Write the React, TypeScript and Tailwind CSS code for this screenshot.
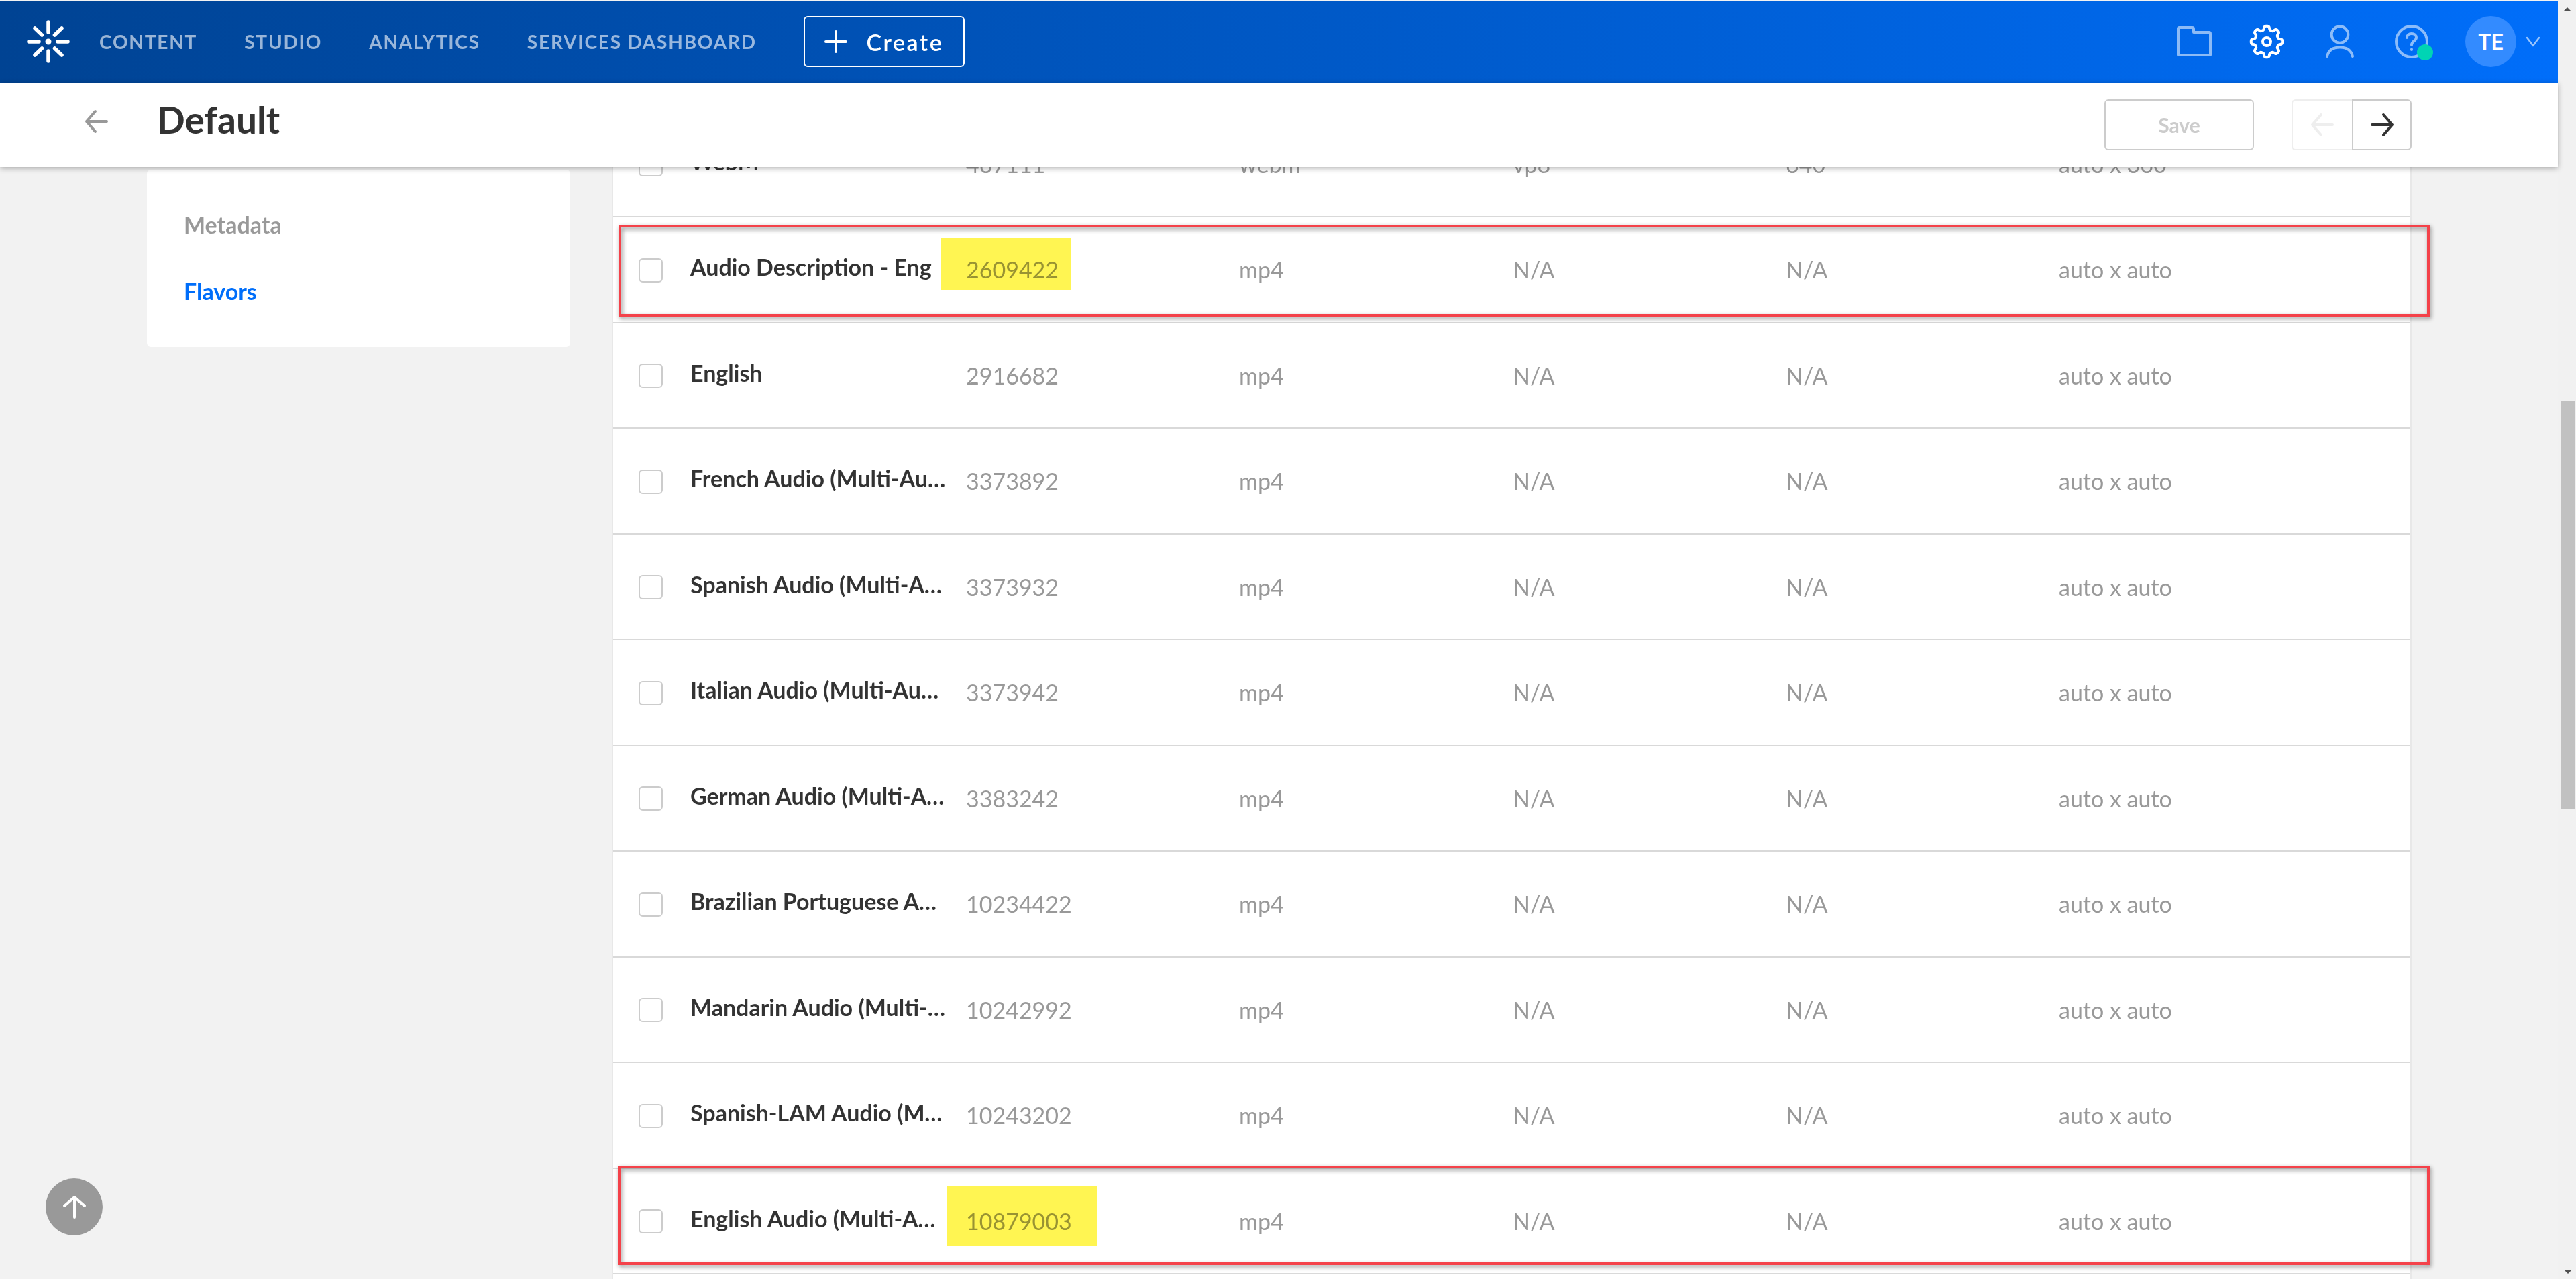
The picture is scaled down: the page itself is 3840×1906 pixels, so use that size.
import React from 'react';

interface Flavor {
  name: string;
  bitrate: string;
  codec: string;
  width: string;
  height: string;
  size: string;
}

const flavors: Flavor[] = [
  { name: 'WebM', bitrate: '467111', codec: 'webm', width: 'vp8', height: '640', size: 'auto x 360' },
  { name: 'Audio Description - Eng', bitrate: '2609422', codec: 'mp4', width: 'N/A', height: 'N/A', size: 'auto x auto' },
  { name: 'English', bitrate: '2916682', codec: 'mp4', width: 'N/A', height: 'N/A', size: 'auto x auto' },
  { name: 'French Audio (Multi-Audio)', bitrate: '3373892', codec: 'mp4', width: 'N/A', height: 'N/A', size: 'auto x auto' },
  { name: 'Spanish Audio (Multi-Audio)', bitrate: '3373932', codec: 'mp4', width: 'N/A', height: 'N/A', size: 'auto x auto' },
  { name: 'Italian Audio (Multi-Audio)', bitrate: '3373942', codec: 'mp4', width: 'N/A', height: 'N/A', size: 'auto x auto' },
  { name: 'German Audio (Multi-Audio)', bitrate: '3383242', codec: 'mp4', width: 'N/A', height: 'N/A', size: 'auto x auto' },
  { name: 'Brazilian Portuguese Audio', bitrate: '10234422', codec: 'mp4', width: 'N/A', height: 'N/A', size: 'auto x auto' },
  { name: 'Mandarin Audio (Multi-Audio)', bitrate: '10242992', codec: 'mp4', width: 'N/A', height: 'N/A', size: 'auto x auto' },
  { name: 'Spanish-LAM Audio (Multi-Audio)', bitrate: '10243202', codec: 'mp4', width: 'N/A', height: 'N/A', size: 'auto x auto' },
  { name: 'English Audio (Multi-Audio)', bitrate: '10879003', codec: 'mp4', width: 'N/A', height: 'N/A', size: 'auto x auto' },
  { name: 'Closed Captions', bitrate: '10879010', codec: 'mp4', width: 'N/A', height: 'N/A', size: 'auto x auto' },
];

// 8 soft teeth around a circle
const gearPath = (() => {
  const pts: string[] = [];
  for (let i = 0; i < 160; i++) {
    const a = (i / 160) * Math.PI * 2;
    const r = 20.5 + 2.8 * Math.tanh(2.2 * Math.cos(8 * a));
    pts.push(`${(26 + r * Math.cos(a)).toFixed(2)} ${(26 + r * Math.sin(a)).toFixed(2)}`);
  }
  return `M${pts.join('L')}Z`;
})();

const Logo = () => (
  <svg width="64" height="64" viewBox="0 0 64 64" fill="#fff" stroke="#fff" strokeWidth="5.5" strokeLinecap="round">
    <circle cx="32" cy="32" r="4.5" stroke="none" />
    <path d="M3 32h15M46 32h15M32 3v15M32 46v15M12 12l10.500 10M52 12 41.500 22M12 52l10.500-10M52 52 41.500 42" />
  </svg>
);

const Arrow = ({ dir, className }: { dir: 'left' | 'right' | 'up'; className: string }) => {
  const d =
    dir === 'left'
      ? 'M33 18H3M16 3 3 18l13 15'
      : dir === 'right'
        ? 'M3 18h30M20 3l13 15-13 15'
        : 'M18 33V3M3 16 18 3l15 13';
  return (
    <svg width="36" height="36" viewBox="0 0 36 36" fill="none" stroke="currentColor" strokeWidth="4" strokeLinecap="round" strokeLinejoin="round" className={className}>
      <path d={d} />
    </svg>
  );
};

const TopNav = () => (
  <nav className="h-[122px] mt-px flex items-center bg-gradient-to-r from-[#004393] to-[#006efa] pl-[40px] pr-[26px]">
    <Logo />
    <div className="ml-[44px] flex items-center gap-[70px] text-[28px] font-bold tracking-[1.8px] text-white/60">
      <span>CONTENT</span>
      <span>STUDIO</span>
      <span>ANALYTICS</span>
      <span>SERVICES DASHBOARD</span>
    </div>
    <button className="ml-[70px] w-[240px] h-[76px] border-2 border-white rounded-[6px] flex items-center justify-center gap-[28px] text-white text-[34px] font-semibold tracking-[2.5px]">
      <svg width="34" height="34" viewBox="0 0 34 34" stroke="#fff" strokeWidth="4" strokeLinecap="round">
        <path d="M17 2v30M2 17h30" />
      </svg>
      Create
    </button>
    <div className="ml-auto flex items-center">
      <svg width="52" height="46" viewBox="0 0 52 46" fill="none" stroke="#fff" strokeOpacity="0.55" strokeWidth="4" strokeLinejoin="round">
        <path d="M3 2h20a2 2 0 0 1 2 2v5h23a2 2 0 0 1 2 2v32H2V3Z" />
      </svg>
      <svg className="ml-[56px]" width="52" height="52" viewBox="0 0 52 52" fill="none" stroke="#fff" strokeWidth="4" strokeLinejoin="round">
        <path d={gearPath} />
        <circle cx="26" cy="26" r="6" />
      </svg>
      <svg className="ml-[61px]" width="44" height="50" viewBox="0 0 44 50" fill="none" stroke="#fff" strokeOpacity="0.55" strokeWidth="4" strokeLinecap="round">
        <circle cx="22" cy="14.500" r="12.300" />
        <path d="M3 47C5 38 12 33.500 22 33.500S39 38 41 47" />
      </svg>
      <div className="ml-[60px] relative w-[50px] h-[50px]">
        <svg width="50" height="50" viewBox="0 0 50 50" fill="none" stroke="#fff" strokeOpacity="0.55" strokeWidth="4" strokeLinecap="round">
          <circle cx="25" cy="25" r="23" />
          <path d="M18 19c0-4 3-6 7-6s7 2 7 6c0 5-7 5-7 11" />
          <path d="M25 36.500v.5" />
        </svg>
        <span className="absolute left-[33px] top-[29px] w-[24px] h-[24px] rounded-full bg-[#00d4b4]" />
      </div>
      <div className="ml-[55px] w-[76px] h-[76px] rounded-full bg-[#338bff] flex items-center justify-center text-white text-[32px] font-bold">TE</div>
      <svg className="ml-[14px]" width="22" height="16" viewBox="0 0 22 16" fill="none" stroke="#fff" strokeOpacity="0.6" strokeWidth="2.5" strokeLinecap="round" strokeLinejoin="round">
        <path d="M2 2l9 12 9-12" />
      </svg>
    </div>
  </nav>
);

const SubHeader = () => (
  <div className="h-[126px] bg-white flex items-center pl-[126px] pr-[218px] shadow-[0_2px_8px_rgba(0,0,0,0.3)]">
    <Arrow dir="left" className="text-[#999] -translate-y-[5px]" />
    <h1 className="ml-[72px] text-[55px] font-bold text-[#333] -translate-y-[8px]">Default</h1>
    <button className="ml-auto w-[223px] h-[76px] border-2 border-[#ccc] rounded-[6px] text-[30px] font-bold text-[#ccc]">Save</button>
    <div className="ml-[56px] flex h-[76px]">
      <button className="w-[90px] border-2 border-r-0 border-[#eee] rounded-l-[6px] flex items-center justify-center">
        <Arrow dir="left" className="text-[#eee]" />
      </button>
      <button className="w-[89px] border-2 border-[#ccc] rounded-r-[6px] flex items-center justify-center">
        <Arrow dir="right" className="text-[#333]" />
      </button>
    </div>
  </div>
);

const FlavorRow = ({ flavor }: { flavor: Flavor }) => (
  <div className="h-[157.5px] border-b-[2px] border-[#d9d9d9] flex items-center pl-[38px] text-[34px] text-[#999]">
    <span className="w-[36px] h-[36px] mt-[2px] shrink-0 border-2 border-[#ccc] rounded-[6px]" />
    <span className="ml-[41px] w-[382px] shrink-0 truncate font-bold text-[#333] -translate-y-[4px]">{flavor.name}</span>
    <span className="ml-[29px] w-[407px] shrink-0">{flavor.bitrate}</span>
    <span className="w-[408px] shrink-0">{flavor.codec}</span>
    <span className="w-[407px] shrink-0">{flavor.width}</span>
    <span className="w-[407px] shrink-0">{flavor.height}</span>
    <span>{flavor.size}</span>
  </div>
);

// red annotation boxes and yellow marker strokes pasted over the screenshot
const Annotations = () => (
  <>
    <div className="absolute left-[922px] top-[335px] w-[2700px] h-[137px] border-[4px] border-[#f4424a] drop-shadow-[2px_3px_3px_rgba(0,0,0,0.45)]" />
    <div className="absolute left-[921px] top-[1737px] w-[2701px] h-[148px] border-[4px] border-[#f4424a] drop-shadow-[2px_3px_3px_rgba(0,0,0,0.45)]" />
    <div className="absolute left-[1402px] top-[355px] w-[195px] h-[77px] bg-[#fff552] mix-blend-multiply" />
    <div className="absolute left-[1412px] top-[1767px] w-[223px] h-[90px] bg-[#fff552] mix-blend-multiply" />
  </>
);

export default function App() {
  return (
    <div className="relative w-[3840px] h-[1906px] overflow-hidden flex bg-white font-['Lato',sans-serif]">
      <main className="w-[3813px] h-full bg-[#f2f2f2]">
        <header className="relative z-10">
          <TopNav />
          <SubHeader />
        </header>
        <div className="-mt-[82.5px] flex items-start pl-[219px]">
          <aside className="mt-[86.5px] w-[631px] h-[264px] bg-white rounded-[6px] pl-[55px] pt-[62px] text-[34px] font-bold">
            <div className="text-[#999] leading-[40px]">Metadata</div>
            <div className="mt-[59px] text-[#006efa] leading-[40px]">Flavors</div>
          </aside>
          <section className="ml-[62px] w-[2683px] bg-white border-x-[2px] border-[#e8e8e8]">
            {flavors.map(f => (
              <FlavorRow key={f.bitrate} flavor={f} />
            ))}
          </section>
        </div>
        <button className="absolute left-[68px] top-[1756px] w-[85px] h-[85px] rounded-full bg-[#999] flex items-center justify-center">
          <Arrow dir="up" className="text-white" />
        </button>
      </main>
      <div className="w-[27px] h-full bg-[#f1f1f1] relative">
        <span className="absolute left-[8px] top-[11px] w-0 h-0 border-x-[6px] border-x-transparent border-b-[6px] border-b-[#505050]" />
        <div className="absolute left-[4px] top-[598px] w-[21px] h-[607px] bg-[#c1c1c1]" />
        <span className="absolute left-[9px] bottom-[8px] w-0 h-0 border-x-[6px] border-x-transparent border-t-[6px] border-t-[#505050]" />
      </div>
      <Annotations />
    </div>
  );
}
